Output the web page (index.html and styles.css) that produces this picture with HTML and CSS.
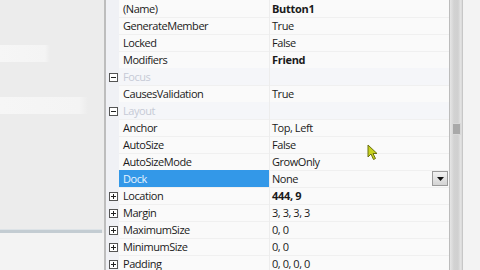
FILE: index.html
```html
<!DOCTYPE html>
<html>
<head>
<meta charset="utf-8">
<link rel="stylesheet" href="styles.css">
</head>
<body>
<div class="screen">
  <div class="designer">
    <div class="band band-a"></div>
    <div class="band band-b"></div>
    <div class="spacer"></div>
    <div class="sep"></div>
    <div class="lower"></div>
  </div>
  <div class="grid">
    <div class="row"><span class="gut"></span><span class="name">(Name)</span><span class="val bold">Button1</span></div>
    <div class="row"><span class="gut"></span><span class="name">GenerateMember</span><span class="val">True</span></div>
    <div class="row"><span class="gut"></span><span class="name">Locked</span><span class="val">False</span></div>
    <div class="row"><span class="gut"></span><span class="name">Modifiers</span><span class="val bold">Friend</span></div>
    <div class="row cat"><span class="gut"><i class="box minus"></i></span><span class="name">Focus</span><span class="val"></span></div>
    <div class="row"><span class="gut"></span><span class="name">CausesValidation</span><span class="val">True</span></div>
    <div class="row cat"><span class="gut"><i class="box minus"></i></span><span class="name">Layout</span><span class="val"></span></div>
    <div class="row"><span class="gut"></span><span class="name">Anchor</span><span class="val">Top, Left</span></div>
    <div class="row"><span class="gut"></span><span class="name">AutoSize</span><span class="val">False</span></div>
    <div class="row"><span class="gut"></span><span class="name">AutoSizeMode</span><span class="val">GrowOnly</span></div>
    <div class="row sel"><span class="gut"></span><span class="name">Dock</span><span class="val">None<span class="drop"><svg width="7" height="4" viewBox="0 0 7 4"><path d="M0 0H7L3.5 4Z" fill="#111"/></svg></span></span></div>
    <div class="row"><span class="gut"><i class="box plus"></i></span><span class="name">Location</span><span class="val bold">444, 9</span></div>
    <div class="row"><span class="gut"><i class="box plus"></i></span><span class="name">Margin</span><span class="val">3, 3, 3, 3</span></div>
    <div class="row"><span class="gut"><i class="box plus"></i></span><span class="name">MaximumSize</span><span class="val">0, 0</span></div>
    <div class="row"><span class="gut"><i class="box plus"></i></span><span class="name">MinimumSize</span><span class="val">0, 0</span></div>
    <div class="row"><span class="gut"><i class="box plus"></i></span><span class="name">Padding</span><span class="val">0, 0, 0, 0</span></div>
  </div>
  <div class="scroll"><div class="grip"></div></div>
  <div class="rightpane"></div>
  <svg class="cursor" width="12" height="17" viewBox="0 0 12 17"><path d="M1 1L1 13L4 10L6.5 15.5L8.5 14.5L6 9.5L10 9.5Z" fill="#c8d21e" stroke="#6b7010" stroke-width="1"/></svg>
</div>
</body>
</html>
```
FILE: styles.css
```css
html, body { margin: 0; padding: 0; }
body { background: #ededed; font-family: "Open Sans", "Noto Sans", sans-serif; }
.screen { position: relative; width: 480px; height: 270px; overflow: hidden; display: flex; background: #eeeeee; }
.designer { width: 104px; flex: none; display: flex; flex-direction: column; background: #ececec; border-right: 2px solid #bdbdbd; }
.band { height: 17px; background: linear-gradient(90deg, #f6f6f6 0%, #f4f4f4 90%, #ececec 100%); }
.band-a { width: 50px; margin-top: 45px; }
.band-b { width: 88px; margin-top: 35px; }
.spacer { flex: 1; }
.sep { height: 3px; margin-right: 2px; background: #c3ccd2; border-top: 1px solid #dde3e7; }
.lower { height: 37px; background: #f3f3f3; }
.grid { width: 343px; flex: none; display: flex; flex-direction: column; background: #fafafa; }
.row { display: grid; grid-template-columns: 13px 151px 1fr; height: 17px; flex: none; font-size: 11px; letter-spacing: -0.45px; color: #1a1a1a; line-height: 17px; }
.gut { background: #f0f1f5; display: flex; align-items: center; justify-content: center; }
.name { padding-left: 4px; border-bottom: 1px solid #f0f0f0; border-right: 1px solid #ededed; white-space: nowrap; box-sizing: border-box; }
.val { padding-left: 2px; border-bottom: 1px solid #f0f0f0; position: relative; white-space: nowrap; box-sizing: border-box; }
.bold { font-weight: bold; letter-spacing: -0.3px; }
.cat .name { color: #c6cad6; background: #f5f6f9; }
.cat .val { background: #f5f6f9; }
.sel .name { background: #3398e8; color: #e8f4ff; }
.drop { position: absolute; right: 1px; top: 1px; width: 16px; height: 15px; box-sizing: border-box; border: 1px solid #9a9a9a; background: linear-gradient(#f2f2f2, #d4d4d4); display: flex; align-items: center; justify-content: center; }
.box { display: block; width: 9px; height: 9px; box-sizing: border-box; border: 1px solid #555; background: #fff; position: relative; margin-left: 2px; }
.box::before { content: ""; position: absolute; left: 1px; top: 3px; width: 5px; height: 1px; background: #222; }
.plus::after { content: ""; position: absolute; left: 3px; top: 1px; width: 1px; height: 5px; background: #222; }
.scroll { width: 14px; flex: none; position: relative; background: linear-gradient(90deg, #bcbcbc 0, #bcbcbc 1px, #e6e6e6 1px, #d2d2d2 5px, #d0d0d0 9px, #e6e6e6 12px, #bdbdbd 14px); }
.grip { position: absolute; left: 3px; top: 123px; width: 7px; height: 10px; background: #a9a9a9; border: 1px solid #d8d8d8; }
.rightpane { flex: 1; background: #f3f3f3; }
.cursor { position: absolute; left: 367px; top: 144px; }
```
